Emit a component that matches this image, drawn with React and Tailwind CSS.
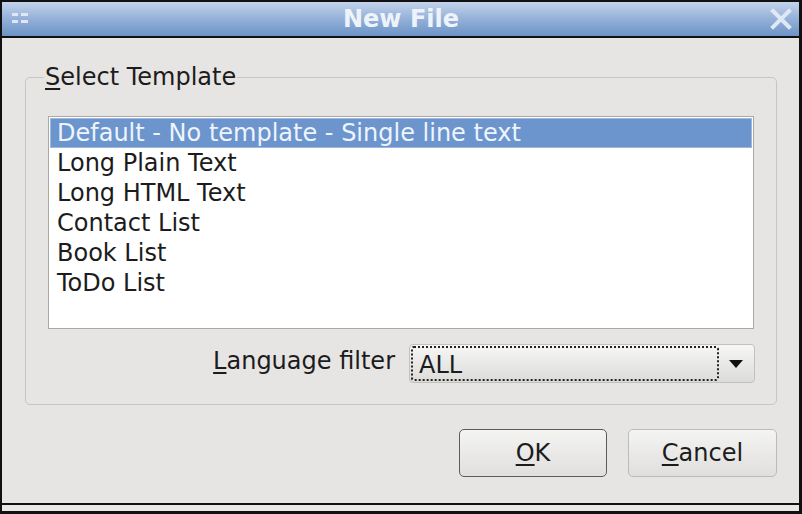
import React, { useState } from 'react';

const templates = [
  "Default - No template - Single line text",
  "Long Plain Text",
  "Long HTML Text",
  "Contact List",
  "Book List",
  "ToDo List",
];

function Grip() {
  return (
    <svg width="18" height="14" viewBox="0 0 18 14" className="shrink-0">
      <rect x="0" y="1" width="6" height="3" fill="#dfe7f4" />
      <rect x="9" y="1" width="7" height="3" fill="#dfe7f4" />
      <rect x="0" y="8" width="6" height="3" fill="#dfe7f4" />
      <rect x="9" y="8" width="7" height="3" fill="#dfe7f4" />
    </svg>
  );
}

function CloseX() {
  return (
    <svg width="22" height="22" viewBox="0 0 22 22" className="shrink-0">
      <path d="M3 3 L19 19 M19 3 L3 19" stroke="#dfe8f5" strokeWidth="4" strokeLinecap="square" />
    </svg>
  );
}

export default function App() {
  const [selected, setSelected] = useState(0);

  return (
    <div
      className="w-[802px] h-[514px] bg-[#111] flex flex-col pt-[2px] pl-[2px] pr-[3px] pb-[3px] text-[#1c1c1c]"
      style={{ fontFamily: '"DejaVu Sans", "Liberation Sans", sans-serif' }}
    >
      {/* title bar */}
      <div className="h-[34px] flex items-center justify-between pl-[10px] pr-[7px] bg-gradient-to-b from-[#c3d3ea] via-[#94b0d8] to-[#6c93c7]">
        <Grip />
        <span className="text-[24px] font-bold text-[#eef3fa] leading-none ml-[2px]">New File</span>
        <CloseX />
      </div>
      <div className="h-[2px] bg-[#111]" />

      {/* body */}
      <div className="h-[465px] bg-[#e6e5e3] flex flex-col pt-[25px] pl-[23px] pr-[22px]">
        <fieldset className="border border-[#c6c5c2] rounded-[5px] px-[22px] pb-[21px] pt-[25px] m-0">
          <legend className="text-[24px] leading-[28px] px-[1px] ml-[-4px]">
            <span className="underline underline-offset-[3px]">S</span>elect Template
          </legend>

          <div className="h-[213px] bg-white border border-[#a9a8a6] p-[1px] flex flex-col">
            {templates.map((t, i) => (
              <div
                key={t}
                onClick={() => setSelected(i)}
                className={`h-[30px] shrink-0 flex items-center px-[6px] text-[24px] leading-none ${
                  selected == i
                    ? "bg-[#6b95cc] text-[#eef4fc] border border-[#9db8de]"
                    : "border border-transparent"
                }`}
              >
                {t}
              </div>
            ))}
          </div>

          <div className="flex items-center justify-end gap-[14px] mt-[15px] mr-[-1px]">
            <span className="text-[24px] leading-none mb-[6px]">
              <span className="underline underline-offset-[3px]">L</span>anguage filter
            </span>
            <div className="w-[346px] h-[39px] flex items-center border border-[#c2c1be] rounded-[4px] bg-gradient-to-b from-[#f6f6f5] to-[#dcdcda] p-[1px]">
              <div className="flex-1 h-full flex items-end pb-[2px] pl-[6px] border-2 border-dotted border-[#222] rounded-[3px] text-[24px] leading-none">
                ALL
              </div>
              <div className="w-[34px] h-full flex items-center justify-center">
                <svg width="14" height="8" viewBox="0 0 14 8">
                  <path d="M0 0 L14 0 L7 8 Z" fill="#111" />
                </svg>
              </div>
            </div>
          </div>
        </fieldset>

        <div className="flex justify-end gap-[21px] mt-[24px]">
          <button className="w-[148px] h-[48px] border border-[#5d5c5a] rounded-[5px] bg-gradient-to-b from-[#f4f4f3] to-[#e0dfdd] text-[24px] flex items-center justify-center">
            <span><span className="underline underline-offset-[3px]">O</span>K</span>
          </button>
          <button className="w-[149px] h-[48px] border border-[#bcbbb8] rounded-[5px] bg-gradient-to-b from-[#f4f4f3] to-[#e0dfdd] text-[24px] flex items-center justify-center">
            <span><span className="underline underline-offset-[3px]">C</span>ancel</span>
          </button>
        </div>
      </div>

      <div className="h-[2px] bg-[#111]" />
      <div className="h-[6px] bg-[#e9e8e6]" />
    </div>
  );
}
